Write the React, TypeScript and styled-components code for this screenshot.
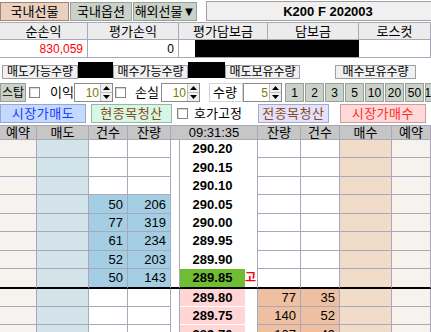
import styled, { createGlobalStyle, css } from "styled-components";

const GRID = "#a8a8b8";

const GlobalStyle = createGlobalStyle`
  html, body { margin: 0; padding: 0; background: #fff; }
  body {
    width: 431px;
    height: 332px;
    overflow: hidden;
    font-family: "Liberation Sans", "Noto Sans CJK KR", sans-serif;
    font-size: 12px;
    color: #000;
  }
  * { box-sizing: border-box; }
`;

const Screen = styled.div`
  width: 431px;
  height: 332px;
  overflow: hidden;
  display: flex;
  flex-direction: column;
`;

/* ---------- tabs ---------- */
const TabBar = styled.div`
  height: 22px;
  display: flex;
  align-items: flex-start;
  padding-top: 1px;
  gap: 1px;
`;

const Tab = styled.div<{ $active?: boolean; $w: number }>`
  width: ${(p) => p.$w}px;
  height: 19px;
  margin-top: 1px;
  background: ${(p) => (p.$active ? "#e9d0bf" : "#c9d1c9")};
  border: 1px solid ${(p) => (p.$active ? "#a08474" : "#99a199")};
  display: flex;
  align-items: center;
  justify-content: center;
  font-size: 13px;
  line-height: 1;
`;

const TitleBox = styled.div`
  flex: 1;
  margin-left: 8px;
  height: 20px;
  background: #f0f0f0;
  border: 1px solid #a0a0a0;
  border-right: none;
  display: flex;
  align-items: center;
  justify-content: center;
  padding-left: 18px;
  font-weight: bold;
  font-size: 13px;
`;

/* ---------- summary ---------- */
const Summary = styled.div`
  margin-top: 1px;
  display: grid;
  grid-template-columns: 88px 91px 89px 91px 1fr;
  grid-template-rows: 17px 17px;
  border-top: 1px solid ${GRID};
  border-bottom: 1px solid ${GRID};
`;

const SumHead = styled.div`
  background: #ececec;
  border-right: 1px solid ${GRID};
  border-bottom: 1px solid ${GRID};
  display: flex;
  align-items: center;
  justify-content: center;
  font-size: 13px;
  line-height: 1;
`;

const SumValue = styled.div<{ $red?: boolean; $fill?: "full" | "part" }>`
  border-right: 1px solid ${GRID};
  display: flex;
  align-items: center;
  justify-content: flex-end;
  padding-right: 4px;
  color: ${(p) => (p.$red ? "#ff0000" : "#000")};
  ${(p) =>
    p.$fill === "full" &&
    css`
      background: #000;
      border-right-color: #000;
    `}
  ${(p) =>
    p.$fill === "part" &&
    css`
      background: linear-gradient(to right, #fff 0 16px, #000 16px);
      border-right-color: #000;
    `}
`;

/* ---------- quantities ---------- */
const QtyBar = styled.div`
  margin-top: 3px;
  height: 18px;
  display: flex;
  padding-left: 2px;
`;

const QtyLabel = styled.div<{ $w: number }>`
  width: ${(p) => p.$w}px;
  height: 14px;
  margin-top: 4px;
  background: #f0f0f0;
  border: 1px solid #a0a0a0;
  display: flex;
  align-items: center;
  justify-content: center;
  font-size: 12px;
  line-height: 1;
`;

const QtyValue = styled.div<{ $w: number; $dark?: boolean }>`
  width: ${(p) => p.$w}px;
  height: 16px;
  margin-top: 1px;
  background: ${(p) => (p.$dark ? "#000" : "#fff")};
`;

/* ---------- controls ---------- */
const ControlBar = styled.div`
  margin-top: 4px;
  height: 19px;
  display: flex;
  align-items: center;
`;

const GrayButton = styled.div<{ $w: number; $ml?: number }>`
  width: ${(p) => p.$w}px;
  height: 19px;
  margin-left: ${(p) => p.$ml ?? 0}px;
  flex-shrink: 0;
  background: #c9d1c9;
  border: 1px solid #98a098;
  display: flex;
  align-items: center;
  justify-content: center;
  font-size: 12px;
  line-height: 1;
  white-space: nowrap;
  overflow: hidden;
`;

const Check = styled.span<{ $ml: number }>`
  width: 11px;
  height: 11px;
  margin-left: ${(p) => p.$ml}px;
  flex-shrink: 0;
  background: #fff;
  border: 1px solid #848484;
  box-shadow: inset 1px 1px 0 #d8d8d8;
`;

const Caption = styled.span<{ $ml: number; $w?: number }>`
  margin-left: ${(p) => p.$ml}px;
  width: ${(p) => (p.$w ? `${p.$w}px` : "auto")};
  flex-shrink: 0;
  font-size: 13px;
  line-height: 1;
  white-space: nowrap;
`;

const Spin = styled.div<{ $ml: number; $w: number }>`
  margin-left: ${(p) => p.$ml}px;
  height: 19px;
  display: flex;
  flex-shrink: 0;
  border: 1px solid #8a8a8a;
  background: #fff;
  width: ${(p) => p.$w}px;
`;

const SpinValue = styled.div`
  flex: 1;
  display: flex;
  align-items: center;
  justify-content: flex-end;
  padding-right: 1px;
  color: #807a00;
  font-size: 12px;
`;

const SpinArrows = styled.div`
  width: 12px;
  display: flex;
  flex-direction: column;
  border-left: 1px solid #c0c0c0;
  background: #f0f0f0;
`;

const SpinHalf = styled.div<{ $top?: boolean }>`
  flex: 1;
  display: flex;
  align-items: center;
  justify-content: center;
  border-bottom: ${(p) => (p.$top ? "1px solid #c0c0c0" : "none")};
`;

const QtyCaption = styled.div`
  margin-left: 9px;
  width: 34px;
  height: 19px;
  flex-shrink: 0;
  border: 1px solid #d4d4d4;
  display: flex;
  align-items: center;
  padding-left: 3px;
  font-size: 13px;
  line-height: 1;
  white-space: nowrap;
`;

/* ---------- order buttons ---------- */
const OrderBar = styled.div`
  margin-top: 2px;
  height: 19px;
  display: flex;
  align-items: center;
`;

const OrderButton = styled.div<{ $w: number; $ml: number; $bg: string; $fg: string; $bd: string }>`
  width: ${(p) => p.$w}px;
  margin-left: ${(p) => p.$ml}px;
  height: 19px;
  flex-shrink: 0;
  background: ${(p) => p.$bg};
  color: ${(p) => p.$fg};
  border: 1px solid ${(p) => p.$bd};
  display: flex;
  align-items: center;
  justify-content: center;
  font-size: 13px;
  line-height: 1;
  letter-spacing: 0.5px;
`;

/* ---------- order book ---------- */
const BookHead = styled.div`
  margin-top: 2px;
  height: 18px;
  display: grid;
  grid-template-columns: 37px 52px 39px 43px 87px 43px 39px 52px 39px;
  background: #c6c6c6;
  border-top: 1px solid ${GRID};
  border-bottom: 1px solid ${GRID};
`;

const HeadCell = styled.div`
  border-right: 1px solid ${GRID};
  display: flex;
  align-items: center;
  justify-content: center;
  font-size: 13px;
  line-height: 1;
`;

const BookRow = styled.div<{ $divider?: boolean }>`
  height: ${(p) => (p.$divider ? "19.45px" : "18.45px")};
  flex-shrink: 0;
  display: grid;
  grid-template-columns: 37px 52px 39px 43px 9px 65px 13px 43px 39px 52px 39px;
  ${(p) =>
    p.$divider &&
    css`
      & > * {
        border-bottom: 2px solid #000 !important;
      }
    `}
`;

const Cell = styled.div<{ $bg?: string }>`
  background: ${(p) => p.$bg ?? "#fff"};
  border-right: 1px solid ${GRID};
  border-bottom: 1px solid ${GRID};
  display: flex;
  align-items: center;
  justify-content: flex-end;
  padding-right: 4px;
  font-size: 13px;
  line-height: 1;
`;

const Gap = styled.div`
  border-right: 1px solid ${GRID};
`;

const PriceCell = styled.div<{ $kind?: "current" | "ask" }>`
  background: ${(p) => (p.$kind === "current" ? "#6fbd33" : p.$kind === "ask" ? "#ffd5d5" : "#fff")};
  border-bottom: 1px solid #fff;
  display: flex;
  align-items: center;
  justify-content: center;
  font-weight: bold;
  font-size: 13px;
  line-height: 1;
`;

const MarkCell = styled.div`
  border-right: 1px solid ${GRID};
  display: flex;
  align-items: center;
  color: #ff0000;
  font-weight: bold;
  font-size: 12px;
  line-height: 1;
`;

const Arrow = ({ up }: { up?: boolean }) => (
  <svg width="7" height="4" viewBox="0 0 7 4">
    <polygon points={up ? "3.5,0 7,4 0,4" : "0,0 7,0 3.5,4"} fill="#000" />
  </svg>
);

const Spinner = ({ value, ml, w }: { value: string; ml: number; w: number }) => (
  <Spin $ml={ml} $w={w}>
    <SpinValue>{value}</SpinValue>
    <SpinArrows>
      <SpinHalf $top>
        <Arrow up />
      </SpinHalf>
      <SpinHalf>
        <Arrow />
      </SpinHalf>
    </SpinArrows>
  </Spin>
);

type Level = {
  price: string;
  sellCount?: string;
  sellQty?: string;
  buyQty?: string;
  buyCount?: string;
  current?: boolean;
  mark?: string;
};

const levels: Level[] = [
  { price: "290.20" },
  { price: "290.15" },
  { price: "290.10" },
  { price: "290.05", sellCount: "50", sellQty: "206" },
  { price: "290.00", sellCount: "77", sellQty: "319" },
  { price: "289.95", sellCount: "61", sellQty: "234" },
  { price: "289.90", sellCount: "52", sellQty: "203" },
  { price: "289.85", sellCount: "50", sellQty: "143", current: true, mark: "고" },
  { price: "289.80", buyQty: "77", buyCount: "35" },
  { price: "289.75", buyQty: "140", buyCount: "52" },
  { price: "289.70", buyQty: "107", buyCount: "49" },
];

const SELL_RES = "#f6f3ef";
const SELL_COL = "#d3e3ea";
const SELL_DATA = "#a3cee3";
const BUY_DATA = "#efbfa1";
const BUY_COL = "#f1dcc9";

export default function App() {
  return (
    <>
      <GlobalStyle />
      <Screen>
        <TabBar>
          <Tab $active $w={69}>국내선물</Tab>
          <Tab $w={62}>국내옵션</Tab>
          <Tab $w={64}>해외선물▼</Tab>
          <TitleBox>K200 F 202003</TitleBox>
        </TabBar>

        <Summary>
          <SumHead>순손익</SumHead>
          <SumHead>평가손익</SumHead>
          <SumHead>평가담보금</SumHead>
          <SumHead>담보금</SumHead>
          <SumHead>로스컷</SumHead>
          <SumValue $red>830,059</SumValue>
          <SumValue>0</SumValue>
          <SumValue $fill="part" />
          <SumValue $fill="full" />
          <SumValue />
        </Summary>

        <QtyBar>
          <QtyLabel $w={76}>매도가능수량</QtyLabel>
          <QtyValue $w={35} $dark />
          <QtyLabel $w={75}>매수가능수량</QtyLabel>
          <QtyValue $w={37} $dark />
          <QtyLabel $w={75}>매도보유수량</QtyLabel>
          <QtyValue $w={35} />
          <QtyLabel $w={81}>매수보유수량</QtyLabel>
        </QtyBar>

        <ControlBar>
          <GrayButton $w={26}>스탑</GrayButton>
          <Check $ml={3} />
          <Caption $ml={10} $w={21}>이익</Caption>
          <Spinner value="10" ml={3} w={39} />
          <Check $ml={2} />
          <Caption $ml={9} $w={22}>손실</Caption>
          <Spinner value="10" ml={4} w={39} />
          <QtyCaption>수량</QtyCaption>
          <Spinner value="5" ml={0} w={39} />
          {["1", "2", "3", "5", "10", "20", "50", "100"].map((n, i) => (
            <GrayButton key={n} $w={19} $ml={i === 0 ? 3 : 1}>
              {n}
            </GrayButton>
          ))}
        </ControlBar>

        <OrderBar>
          <OrderButton $w={86} $ml={0} $bg="#c4d9ff" $fg="#1637ff" $bd="#9aa8c8">
            시장가매도
          </OrderButton>
          <OrderButton $w={81} $ml={5} $bg="#d6f7e6" $fg="#8a4a12" $bd="#9ab4a6">
            현종목청산
          </OrderButton>
          <Check $ml={5} />
          <Caption $ml={6}>호가고정</Caption>
          <OrderButton $w={71} $ml={16} $bg="#e2e2ff" $fg="#8a4a12" $bd="#a8a8c8">
            전종목청산
          </OrderButton>
          <OrderButton $w={86} $ml={11} $bg="#ffd8d8" $fg="#ff2a2a" $bd="#d09a9a">
            시장가매수
          </OrderButton>
        </OrderBar>

        <BookHead>
          <HeadCell>예약</HeadCell>
          <HeadCell>매도</HeadCell>
          <HeadCell>건수</HeadCell>
          <HeadCell>잔량</HeadCell>
          <HeadCell>09:31:35</HeadCell>
          <HeadCell>잔량</HeadCell>
          <HeadCell>건수</HeadCell>
          <HeadCell>매수</HeadCell>
          <HeadCell>예약</HeadCell>
        </BookHead>

        {levels.map((lv) => {
          const ask = !!lv.buyQty;
          return (
            <BookRow key={lv.price} $divider={lv.current}>
              <Cell $bg={SELL_RES} />
              <Cell $bg={SELL_COL} />
              <Cell $bg={lv.sellCount ? SELL_DATA : undefined}>{lv.sellCount}</Cell>
              <Cell $bg={lv.sellQty ? SELL_DATA : undefined}>{lv.sellQty}</Cell>
              <Gap />
              <PriceCell $kind={lv.current ? "current" : ask ? "ask" : undefined}>{lv.price}</PriceCell>
              <MarkCell>{lv.mark}</MarkCell>
              <Cell $bg={lv.buyQty ? BUY_DATA : undefined}>{lv.buyQty}</Cell>
              <Cell $bg={lv.buyCount ? BUY_DATA : undefined}>{lv.buyCount}</Cell>
              <Cell $bg={BUY_COL} />
              <Cell $bg={SELL_RES} />
            </BookRow>
          );
        })}
      </Screen>
    </>
  );
}
